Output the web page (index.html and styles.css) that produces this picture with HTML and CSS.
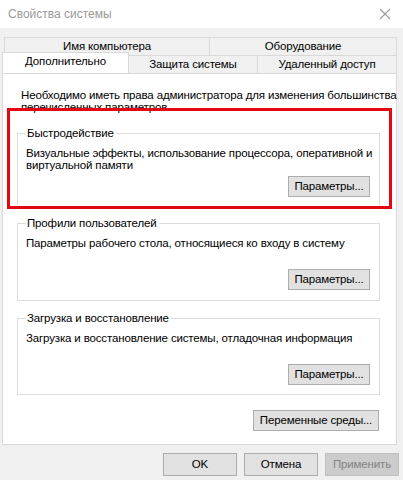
FILE: index.html
```html
<!DOCTYPE html>
<html lang="ru">
<head>
<meta charset="utf-8">
<title>Свойства системы</title>
<link rel="stylesheet" href="styles.css">
</head>
<body>
<div class="window">
  <div class="titlebar">
    <span class="title">Свойства системы</span>
    <svg class="close" width="12" height="12" viewBox="0 0 12 12"><path d="M1 1 L11 11 M11 1 L1 11" stroke="#9a9a9a" stroke-width="1.1" fill="none"/></svg>
  </div>
  <div class="body">
    <div class="tabs">
      <div class="tabrow row1">
        <div class="tab t-name">Имя компьютера</div>
        <div class="tab t-hw">Оборудование</div>
      </div>
      <div class="tabrow row2">
        <div class="tab selected t-adv">Дополнительно</div>
        <div class="tab t-prot">Защита системы</div>
        <div class="tab t-remote">Удаленный доступ</div>
      </div>
    </div>
    <div class="panel">
      <p class="intro">Необходимо иметь права администратора для изменения большинства<br>перечисленных параметров</p>
      <fieldset class="group g1">
        <legend>Быстродействие</legend>
        <p class="desc">Визуальные эффекты, использование процессора, оперативной и<br>виртуальной памяти</p>
        <div class="actions"><button class="btn">Параметры...</button></div>
      </fieldset>
      <fieldset class="group g2">
        <legend>Профили пользователей</legend>
        <p class="desc">Параметры рабочего стола, относящиеся ко входу в систему</p>
        <div class="actions"><button class="btn">Параметры...</button></div>
      </fieldset>
      <fieldset class="group g3">
        <legend>Загрузка и восстановление</legend>
        <p class="desc">Загрузка и восстановление системы, отладочная информация</p>
        <div class="actions"><button class="btn">Параметры...</button></div>
      </fieldset>
      <div class="env-row"><button class="btn env">Переменные среды...</button></div>
      <div class="highlight"></div>
    </div>
    <div class="footer">
      <button class="btn dlg">OK</button>
      <button class="btn dlg">Отмена</button>
      <button class="btn dlg disabled">Применить</button>
    </div>
  </div>
</div>
</body>
</html>
```

FILE: styles.css
```css
* { box-sizing: border-box; }
html, body { margin: 0; padding: 0; }
body {
  width: 403px;
  height: 480px;
  overflow: hidden;
  background: #f0f0f0;
  font-family: "Liberation Sans", Arial, sans-serif;
  font-size: 11.5px;
  letter-spacing: -0.15px;
  color: #000;
}
.titlebar {
  height: 28px;
  background: #fff;
  display: flex;
  align-items: center;
  justify-content: space-between;
  padding: 0 12px 0 8px;
}
.title { color: #9a9a9a; font-size: 12px; letter-spacing: 0; }
.close { display: block; }
.body { padding: 9px 6px 0 2px; }
.tabs { display: flex; flex-direction: column; }
.tabrow { display: flex; }
.row1 { padding: 0 0 0 2px; height: 18px; }
.row2 { height: 18px; align-items: flex-end; }
.tab {
  background: #f0f0f0;
  border: 1px solid #d9d9d9;
  border-bottom: none;
  display: flex;
  align-items: center;
  justify-content: center;
  line-height: 1;
  white-space: nowrap;
  padding-top: 1px;
}
.row1 .tab { height: 18px; }
.row1 .tab + .tab { border-left: none; }
.t-name { width: 206px; }
.t-hw { width: 187px; }
.row2 .tab { height: 18px; }
.row2 .tab + .tab { border-left: none; }
.t-adv { width: 127px; }
.t-prot { width: 129px; }
.t-remote { width: 139px; }
.tab.selected {
  background: #fff;
  height: 21px;
  position: relative;
  z-index: 1;
  margin-top: -3px;
  padding-top: 0;
  padding-bottom: 2px;
}
.panel {
  position: relative;
  background: #fff;
  border: 1px solid #d9d9d9;
  height: 372px;
  width: 395px;
  padding: 15px 16px 0 14px;
}
.intro { margin: 0 0 0 4px; line-height: 12px; white-space: nowrap; }
.group {
  margin: 0;
  border: 1px solid #dcdcdc;
  padding: 0 9px 9px 8px;
  min-width: 0;
}
.group legend {
  padding: 0 2px 0 1px;
  margin-left: 0;
  line-height: 13px;
}
.g1 { margin-top: 14px; padding-bottom: 10px; }
.g2 { margin-top: 9px; padding-bottom: 10px; }
.g3 { margin-top: 11px; }
.desc { margin: 7px 0 0 0; line-height: 12px; white-space: nowrap; }
.actions { display: flex; justify-content: flex-end; margin-top: 20px; }
.g1 .actions { margin-top: 5px; }
.btn {
  font-family: inherit;
  font-size: 11.5px;
  letter-spacing: -0.15px;
  color: #000;
  background: #e1e1e1;
  border: 1px solid #adadad;
  padding: 0;
  height: 21px;
  width: 82px;
  line-height: 1;
  white-space: nowrap;
}
.env-row { display: flex; justify-content: flex-end; margin-top: 15px; padding-right: 1px; }
.btn.env { width: 126px; }
.highlight {
  position: absolute;
  left: 4px;
  top: 34px;
  width: 385px;
  height: 101px;
  border: 3px solid #e30613;
  pointer-events: none;
}
.footer {
  display: flex;
  justify-content: flex-end;
  gap: 7px;
  padding: 8px 0 0 0;
  margin-right: -2px;
}
.btn.dlg { width: 74px; height: 23px; }
.btn.disabled { background: #cccccc; border-color: #bfbfbf; color: #838383; }
```
